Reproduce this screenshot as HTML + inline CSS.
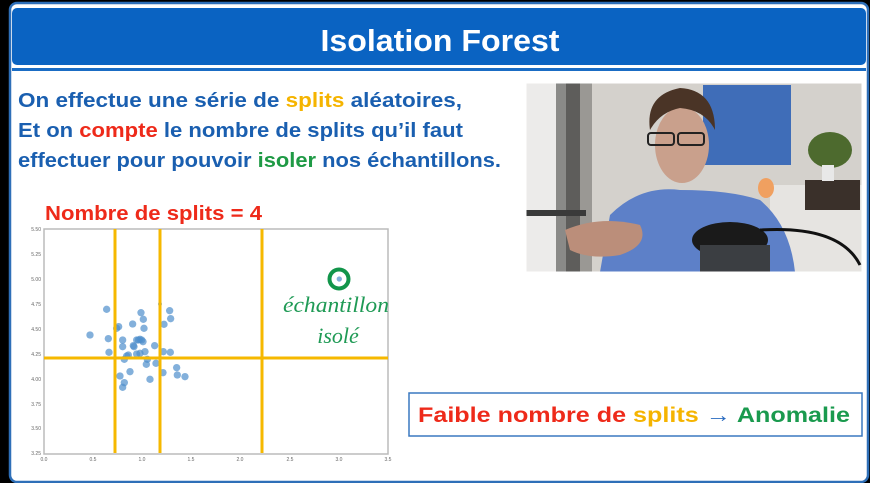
<!DOCTYPE html>
<html><head><meta charset="utf-8"><style>
html,body{margin:0;padding:0;background:#000;}
svg{display:block}
</style></head><body>
<svg width="870" height="483" viewBox="0 0 870 483" xmlns="http://www.w3.org/2000/svg" font-family="Liberation Sans, sans-serif">
<rect x="0" y="0" width="870" height="483" fill="#000"/>
<rect x="10" y="3" width="858" height="479" rx="7" fill="#fff" stroke="#2e6fb8" stroke-width="2.5"/>
<rect x="12" y="8" width="854" height="57" rx="5" fill="#0a63c2"/>
<rect x="12" y="68" width="854" height="3" fill="#1a6cc4"/>
<text x="440" y="51" text-anchor="middle" font-size="31" font-weight="bold" fill="#fff" textLength="239" lengthAdjust="spacingAndGlyphs">Isolation Forest</text>

<g font-weight="bold" font-size="20" fill="#1a5fb0">
<text x="18" y="107" textLength="444" lengthAdjust="spacingAndGlyphs">On effectue une série de <tspan fill="#f5b400">splits</tspan> aléatoires,</text>
<text x="18" y="137" textLength="445" lengthAdjust="spacingAndGlyphs">Et on <tspan fill="#ee2a1a">compte</tspan> le nombre de splits qu’il faut</text>
<text x="18" y="167" textLength="483" lengthAdjust="spacingAndGlyphs">effectuer pour pouvoir <tspan fill="#1f9a45">isoler</tspan> nos échantillons.</text>
</g>
<text x="45" y="220" font-weight="bold" font-size="20" fill="#ee2a1a" textLength="217" lengthAdjust="spacingAndGlyphs">Nombre de splits = 4</text>

<!-- plot -->
<rect x="44" y="229" width="344" height="225" fill="#fff" stroke="#bbb" stroke-width="1.5"/>
<g font-size="5" fill="#666" text-anchor="end">
<text x="41" y="231">5.50</text><text x="41" y="256">5.25</text><text x="41" y="281">5.00</text><text x="41" y="306">4.75</text><text x="41" y="331">4.50</text><text x="41" y="356">4.25</text><text x="41" y="381">4.00</text><text x="41" y="406">3.75</text><text x="41" y="430">3.50</text><text x="41" y="455">3.25</text>
</g>
<g font-size="5" fill="#666" text-anchor="middle">
<text x="44" y="461">0.0</text><text x="93" y="461">0.5</text><text x="142" y="461">1.0</text><text x="191" y="461">1.5</text><text x="240" y="461">2.0</text><text x="290" y="461">2.5</text><text x="339" y="461">3.0</text><text x="388" y="461">3.5</text>
</g>
<g transform="translate(20,200) scale(0.3333)" fill="#4f8fcc" fill-opacity="0.7">
<circle cx="210" cy="405" r="11"/><circle cx="260" cy="328" r="11"/><circle cx="265" cy="416" r="11"/><circle cx="267" cy="457" r="11"/><circle cx="290" cy="385" r="11"/><circle cx="296" cy="380" r="11"/><circle cx="308" cy="420" r="11"/><circle cx="308" cy="440" r="11"/><circle cx="313" cy="478" r="11"/><circle cx="300" cy="528" r="11"/><circle cx="313" cy="548" r="11"/><circle cx="308" cy="562" r="11"/><circle cx="330" cy="515" r="11"/><circle cx="338" cy="372" r="11"/><circle cx="340" cy="437" r="11"/><circle cx="342" cy="440" r="11"/><circle cx="325" cy="465" r="11"/><circle cx="360" cy="418" r="11"/><circle cx="363" cy="338" r="11"/><circle cx="370" cy="358" r="11"/><circle cx="372" cy="385" r="11"/><circle cx="365" cy="420" r="11"/><circle cx="369" cy="425" r="11"/><circle cx="375" cy="455" r="11"/><circle cx="379" cy="493" r="11"/><circle cx="382" cy="478" r="11"/><circle cx="390" cy="538" r="11"/><circle cx="404" cy="437" r="11"/><circle cx="408" cy="490" r="11"/><circle cx="420" cy="312" r="6"/><circle cx="430" cy="455" r="11"/><circle cx="432" cy="373" r="11"/><circle cx="429" cy="518" r="11"/><circle cx="449" cy="332" r="11"/><circle cx="452" cy="356" r="11"/><circle cx="451" cy="457" r="11"/><circle cx="470" cy="503" r="11"/><circle cx="472" cy="525" r="11"/><circle cx="495" cy="530" r="11"/><circle cx="360" cy="460" r="11"/><circle cx="350" cy="462" r="11"/><circle cx="320" cy="468" r="11"/><circle cx="350" cy="420" r="11"/><circle cx="355" cy="420" r="11"/><circle cx="958" cy="237" r="8"/>
</g>
<g stroke="#f6b800" stroke-width="3">
<line x1="115" y1="229" x2="115" y2="453"/>
<line x1="160" y1="229" x2="160" y2="453"/>
<line x1="262" y1="229" x2="262" y2="453"/>
<line x1="44" y1="358" x2="388" y2="358"/>
</g>
<circle cx="339" cy="279" r="9.5" fill="none" stroke="#12954a" stroke-width="4"/>
<g font-family="Liberation Serif, serif" font-style="italic" font-size="22" fill="#1f9a55" text-anchor="middle">
<text x="336" y="312" textLength="106" lengthAdjust="spacingAndGlyphs">échantillon</text>
<text x="338" y="343">isolé</text>
</g>

<!-- photo -->
<g>
<rect x="526" y="83" width="336" height="189" fill="#d4d1cc"/>
<rect x="526" y="83" width="30" height="189" fill="#ecebea"/>
<rect x="556" y="83" width="10" height="189" fill="#8a8a88"/>
<rect x="566" y="83" width="14" height="189" fill="#5e5d5b"/>
<rect x="580" y="83" width="12" height="189" fill="#9a9894"/>
<rect x="703" y="85" width="88" height="80" fill="#3f6db8"/>
<rect x="770" y="185" width="92" height="87" fill="#e6e4e1"/>
<rect x="805" y="180" width="55" height="30" fill="#3a302a"/>
<ellipse cx="830" cy="150" rx="22" ry="18" fill="#4d6a2e"/>
<rect x="822" y="165" width="12" height="16" fill="#e8e8e8"/>
<ellipse cx="766" cy="188" rx="8" ry="10" fill="#f0a060"/>
<rect x="526" y="210" width="60" height="6" fill="#3a3a3a"/>
<path d="M600 272 L610 215 Q640 185 680 190 Q730 190 760 200 Q790 225 795 272 Z" fill="#5d80c8"/>
<ellipse cx="682" cy="145" rx="27" ry="38" fill="#c9a08c"/>
<path d="M650 130 Q645 95 680 88 Q715 90 715 130 Q705 110 680 108 Q660 112 650 130Z" fill="#4a3426"/>
<rect x="648" y="133" width="26" height="12" rx="3" fill="none" stroke="#222" stroke-width="2"/>
<rect x="678" y="133" width="26" height="12" rx="3" fill="none" stroke="#222" stroke-width="2"/>
<path d="M565 230 Q600 215 640 225 Q650 245 620 255 Q590 260 570 250Z" fill="#bb8e7a"/>
<ellipse cx="730" cy="240" rx="38" ry="18" fill="#1a1a1a"/>
<rect x="700" y="245" width="70" height="27" fill="#3b3e42"/>
<path d="M760 230 Q840 225 860 265" fill="none" stroke="#111" stroke-width="3"/>
</g>
<rect x="526" y="83" width="336" height="189" fill="none" stroke="#fff" stroke-width="1"/>

<!-- box -->
<rect x="409" y="393" width="453" height="43" fill="#fff" stroke="#3a78c0" stroke-width="1.5"/>
<text x="418" y="422" font-weight="bold" font-size="21" textLength="432" lengthAdjust="spacingAndGlyphs"><tspan fill="#ee2a1a">Faible nombre de </tspan><tspan fill="#f5b400">splits </tspan><tspan fill="#2a6bc0">→ </tspan><tspan fill="#1a9a4e">Anomalie</tspan></text>
</svg>
</body></html>
